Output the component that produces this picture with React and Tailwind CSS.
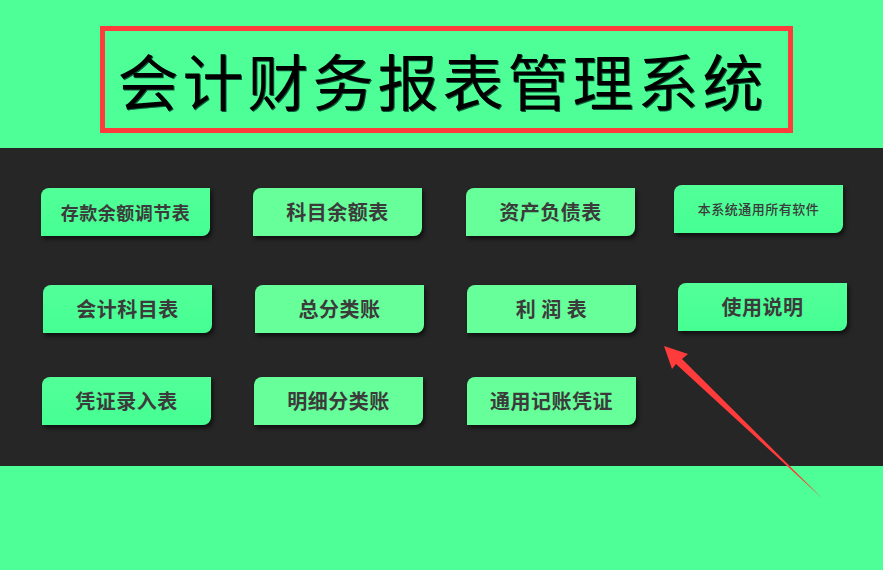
// 会计财务报表管理系统 — 首页菜单

const CJK = { fontFamily: '"Noto Sans CJK SC", "Noto Sans", sans-serif' };

// 每个按钮：文字、底色、字号、微调位置
const buttons = [
  { label: "存款余额调节表", tone: "a", size: "text-[18px]", shift: "ml-[-1px]" },
  { label: "科目余额表", tone: "b", size: "text-[20px]", shift: "ml-[-1px]" },
  { label: "资产负债表", tone: "b", size: "text-[20px]", shift: "ml-[0px]" },
  { label: "本系统通用所有软件", tone: "a", size: "text-[13px] font-medium", shift: "mt-[-3px] ml-[-4px]" },
  { label: "会计科目表", tone: "a", size: "text-[20px]", shift: "mt-[1px] ml-[1px]" },
  { label: "总分类账", tone: "b", size: "text-[20px]", shift: "mt-[1px] ml-[1px]" },
  { label: "利 润 表", tone: "b", size: "text-[20px]", shift: "mt-[1px] ml-[1px]" },
  { label: "使用说明", tone: "a", size: "text-[20px]", shift: "mt-[-1px] ml-[0px]" },
  { label: "凭证录入表", tone: "a", size: "text-[20px]", shift: "mt-[-4px] ml-[0px]" },
  { label: "明细分类账", tone: "b", size: "text-[20px]", shift: "mt-[-4px] ml-[0px]" },
  { label: "通用记账凭证", tone: "b", size: "text-[20px]", shift: "mt-[-4px] ml-[1px]" },
];

function MenuButton({ label, tone, size, shift }) {
  const bg =
    tone === "a"
      ? "bg-gradient-to-b from-[#52ff98] to-[#45ff93]"
      : "bg-[#66ff99]";
  return (
    <button
      className={`${bg} ${shift} w-[169px] h-[48px] rounded-tl-[8px] rounded-br-[8px] shadow-[2px_3px_4px_rgba(0,0,0,0.6)] flex items-center justify-center text-[#3b3b3b] font-bold tracking-[0.5px] ${size}`}
      style={CJK}
    >
      {label}
    </button>
  );
}

export default function App() {
  return (
    <div className="relative w-[883px] h-[570px] bg-[#4dff96] overflow-hidden" style={CJK}>
      {/* ── Titre ─────────────────────────────────────────── */}
      <div className="h-[148px] pt-[26px] pl-[100px]">
        <div className="w-[693px] h-[107px] border-[5px] border-[#ff3b3b] flex items-center justify-center">
          <h1
            className="text-[61px] leading-none text-black tracking-[4px] ml-[-8px] [text-shadow:1px_1px_0_#0b5e3a]"
            style={CJK}
          >
            会计财务报表管理系统
          </h1>
        </div>
      </div>

      {/* ── Bande sombre avec les boutons ─────────────────── */}
      <div className="h-[318px] bg-[#262626] pl-[42px] pt-[40px]">
        <div className="grid grid-cols-[169px_169px_169px_169px] gap-x-[43px] gap-y-[48px]">
          {buttons.map((b) => (
            <MenuButton key={b.label} {...b} />
          ))}
        </div>
      </div>

      {/* ── Flèche rouge ─────────────────────────────────── */}
      <svg
        className="absolute left-0 top-0 pointer-events-none"
        width="883"
        height="570"
        viewBox="0 0 883 570"
      >
        <polygon
          points="664,346 688,354 682,359 823,499 676,364 672,369"
          fill="#ff3b3b"
        />
      </svg>
    </div>
  );
}
